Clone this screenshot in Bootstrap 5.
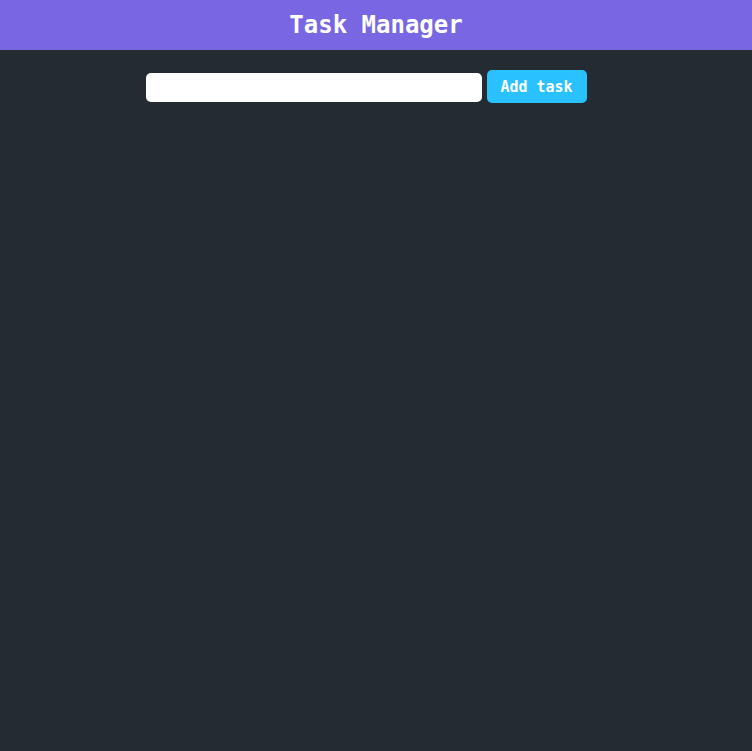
<!DOCTYPE html>
<html lang="en">
<head>
<meta charset="utf-8">
<meta name="viewport" content="width=device-width, initial-scale=1">
<title>Task Manager</title>
<link href="https://cdn.jsdelivr.net/npm/bootstrap@5.3.0/dist/css/bootstrap.min.css" rel="stylesheet">
<style>
  body { background: #242b32; font-family: Consolas, "DejaVu Sans Mono", monospace; }
  .app-header { background: #7966e3; height: 50px; }
  .app-title { font-size: 24px; line-height: 30px; }
  .task-form { gap: 5px; padding: 20px 20px 0 0; }
  .task-input { width: 336px; height: 29px; border-radius: 5px; margin-bottom: 1px; }
  .add-button, .add-button:hover { background: #29c1ff; color: #fff; width: 100px; height: 33px; border-radius: 5px; font-size: 15px; line-height: 20px; }
</style>
</head>
<body>
<header class="app-header d-flex align-items-center justify-content-center">
  <h1 class="app-title fw-bold text-white mb-0">Task Manager</h1>
</header>
<main>
  <form class="task-form d-flex align-items-end justify-content-center">
    <input type="text" class="task-input form-control border-0 py-0 px-2" aria-label="New task">
    <button type="button" class="add-button btn border-0 p-0 fw-bold">Add task</button>
  </form>
</main>
<script src="https://cdn.jsdelivr.net/npm/bootstrap@5.3.0/dist/js/bootstrap.bundle.min.js"></script>
</body>
</html>
